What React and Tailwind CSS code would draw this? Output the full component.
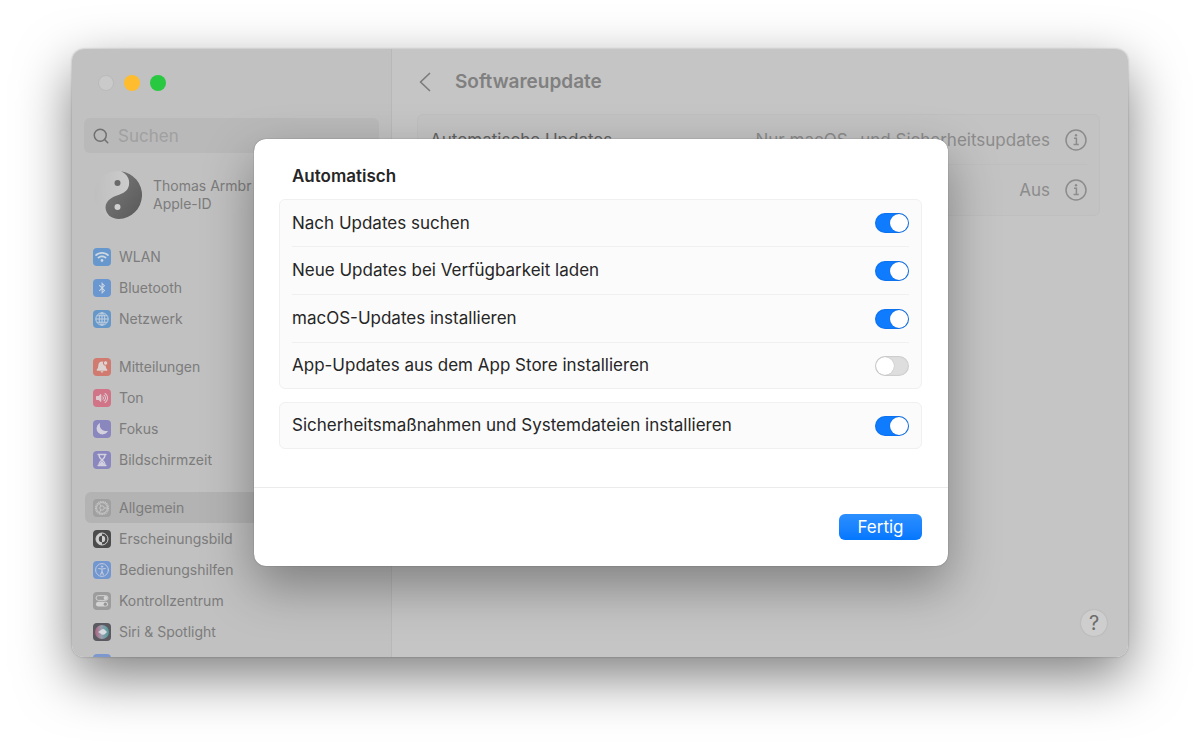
import { useState } from 'react';
import { FaWifi, FaBluetoothB, FaVolumeUp } from 'react-icons/fa';
import { LuSearch } from 'react-icons/lu';
import clsx from 'clsx';

function GlobeIcon() {
  return (
    <svg viewBox="0 0 18 18" className="size-full" fill="none" stroke="#c3d0df" strokeWidth="1">
      <circle cx="9" cy="9" r="6.2" />
      <ellipse cx="9" cy="9" rx="2.8" ry="6.2" />
      <path d="M2.8 9h12.4M9 2.8v12.4M3.8 5.8h10.4M3.8 12.2h10.4" />
    </svg>
  );
}

function BellIcon() {
  return (
    <svg viewBox="0 0 18 18" className="size-full" fill="#dcd2d0">
      <path d="M9 3.6c-2.4 0-3.7 1.8-3.7 4 0 2.5-.9 3.2-1.6 4.2-.3.5 0 .9.5.9h9.600c.5 0 .8-.4.5-.9-.7-1-1.600-1.700-1.600-4.200 0-2.200-1.300-4-3.700-4z" />
      <path d="M7.500 13.300h3c-.2.900-.8 1.300-1.500 1.300s-1.300-.4-1.500-1.300z" />
      <circle cx="12.600" cy="5" r="2.300" stroke="#d07a70" strokeWidth="1" />
    </svg>
  );
}

function MoonIcon() {
  return (
    <svg viewBox="0 0 18 18" className="size-full" fill="#d3d1dd">
      <path d="M7 3.600a.4.4 0 0 0-.6-.3 6 6 0 1 0 8.300 8.200.4.4 0 0 0-.5-.6A6 6 0 0 1 7 3.600z" />
    </svg>
  );
}

function HourglassIcon() {
  return (
    <svg viewBox="0 0 18 18" className="size-full" fill="none" stroke="#d3d1dd" strokeWidth="1.300" strokeLinecap="round">
      <path d="M5 3.500h8M5 14.500h8M6 3.800c0 3 1.200 4 3 5.200 1.800-1.200 3-2.200 3-5.200M6 14.200c0-3 1.200-4 3-5.200 1.800 1.200 3 2.200 3 5.200" />
      <path d="M7 13.500 9 11l2 2.500z" fill="#d3d1dd" />
    </svg>
  );
}

function GearIcon() {
  return (
    <svg viewBox="0 0 18 18" className="size-full" fill="none" stroke="#c6c6c6">
      <circle cx="9" cy="9" r="6.400" strokeWidth="1.400" strokeDasharray="1.100 .6" />
      <circle cx="9" cy="9" r="5.400" strokeWidth="1" />
      <circle cx="9" cy="9" r="2.200" strokeWidth="1" />
      <path d="M11.200 9h3.200M7.900 7.100 6.300 4.300M7.900 10.900l-1.600 2.800" strokeWidth="1" />
    </svg>
  );
}

function AppearanceIcon() {
  return (
    <svg viewBox="0 0 18 18" className="size-full">
      <circle cx="9" cy="9" r="6" fill="#4b4b4b" stroke="#cfcfcf" strokeWidth="1" />
      <path d="M9 3a6 6 0 0 0 0 12v-2.800a3.200 3.200 0 0 1 0-6.400z" fill="#cfcfcf" />
      <path d="M9 5.800a3.200 3.200 0 0 1 0 6.400z" fill="#cfcfcf" />
    </svg>
  );
}

function AccessibilityIcon() {
  return (
    <svg viewBox="0 0 18 18" className="size-full" fill="none" stroke="#c3cbdc" strokeLinecap="round">
      <circle cx="9" cy="9" r="6.400" strokeWidth="1" />
      <circle cx="9" cy="5.600" r=".7" fill="#c3cbdc" />
      <path d="M5.700 7.500 9 8l3.300-.5M9 8v2.300M9 10.300l-1.300 3.200M9 10.300l1.300 3.200" strokeWidth="1.100" />
    </svg>
  );
}

function ControlCenterIcon() {
  return (
    <svg viewBox="0 0 18 18" className="size-full">
      <rect x="3" y="3.600" width="12" height="4.800" rx="2.400" fill="none" stroke="#cfcfcf" />
      <circle cx="12.500" cy="6" r="1.900" fill="#d4d4d4" />
      <rect x="3" y="9.800" width="12" height="4.800" rx="2.400" fill="#d4d4d4" />
      <circle cx="12.300" cy="12.200" r="1.600" fill="#949494" />
    </svg>
  );
}

function SiriIcon() {
  return (
    <svg viewBox="0 0 18 18" className="size-full">
      <defs>
        <linearGradient id="siri" x1="0" y1="0" x2="1" y2="0">
          <stop offset="0" stopColor="#b0607c" />
          <stop offset="0.450" stopColor="#9aa0b0" />
          <stop offset="1" stopColor="#4f9a98" />
        </linearGradient>
      </defs>
      <circle cx="9" cy="9" r="7" fill="url(#siri)" />
      <path d="M5 9c2-.5 3-3 5-3 1.500 0 2.500 1.500 4 3-1.500 1.600-2.500 2.800-4 2.800C8 11.800 7 9.500 5 9z" fill="#d6dce0" />
    </svg>
  );
}

const groups = [
  [
    { label: 'WLAN', color: 'bg-[#6697cd]', icon: <FaWifi className="size-3.5 text-[#ced8e2]" /> },
    { label: 'Bluetooth', color: 'bg-[#6a97d0]', icon: <FaBluetoothB className="size-3 text-[#ced8e2]" /> },
    { label: 'Netzwerk', color: 'bg-[#6697c9]', icon: <GlobeIcon /> },
  ],
  [
    { label: 'Mitteilungen', color: 'bg-[#d07a70]', icon: <BellIcon /> },
    { label: 'Ton', color: 'bg-[#d17488]', icon: <FaVolumeUp className="size-3 text-[#ddc9ce]" /> },
    { label: 'Fokus', color: 'bg-[#8a86be]', icon: <MoonIcon /> },
    { label: 'Bildschirmzeit', color: 'bg-[#8a86be]', icon: <HourglassIcon /> },
  ],
  [
    { label: 'Allgemein', color: 'bg-[#a0a0a0]', icon: <GearIcon />, active: true },
    { label: 'Erscheinungsbild', color: 'bg-[#4b4b4b]', icon: <AppearanceIcon /> },
    { label: 'Bedienungshilfen', color: 'bg-[#7297d0]', icon: <AccessibilityIcon /> },
    { label: 'Kontrollzentrum', color: 'bg-[#9c9c9c]', icon: <ControlCenterIcon /> },
    { label: 'Siri & Spotlight', color: 'bg-[#5b5a60]', icon: <SiriIcon /> },
    { color: 'bg-[#7c98cf]' },
  ],
];

const settings = [
  [
    { id: 'check', label: 'Nach Updates suchen', on: true },
    { id: 'download', label: 'Neue Updates bei Verfügbarkeit laden', on: true },
    { id: 'macos', label: 'macOS-Updates installieren', on: true },
    { id: 'apps', label: 'App-Updates aus dem App Store installieren', on: false },
  ],
  [{ id: 'security', label: 'Sicherheitsmaßnahmen und Systemdateien installieren', on: true }],
];

function Avatar() {
  return (
    <svg viewBox="0 0 50 50" className="size-[50px] shrink-0" aria-hidden="true">
      <defs>
        <linearGradient id="yin" x1="0" y1="0" x2="1" y2="1">
          <stop offset="0" stopColor="#7c7c7c" />
          <stop offset="1" stopColor="#585858" />
        </linearGradient>
        <linearGradient id="yang" x1="0" y1="0" x2="1" y2="0">
          <stop offset="0" stopColor="#bfbfbf" />
          <stop offset="1" stopColor="#d0d0d0" />
        </linearGradient>
      </defs>
      <circle cx="25" cy="25" r="24" fill="url(#yang)" />
      <path
        d="M28 1.200C34 4 37 9 36 15c-1 6-6 8.500-12 10.500-6 2-11 5.500-11.500 11.500C12.500 44 18 49 26 49a24 24 0 0 0 2-47.800z"
        fill="url(#yin)"
      />
      <circle cx="24.500" cy="13" r="3" fill="#6a6a6a" />
      <circle cx="24.500" cy="37" r="3" fill="#cfcfcf" />
    </svg>
  );
}

function SidebarItem({ label, color, icon, active }) {
  return (
    <a
      href="#"
      className={clsx(
        'flex h-[31px] shrink-0 items-center gap-2 rounded-md px-2 text-sm text-[#7c7c7c]',
        active && 'bg-[#b3b3b3]'
      )}
    >
      <span className={clsx('flex size-[18px] shrink-0 items-center justify-center overflow-hidden rounded', color)}>
        {icon}
      </span>
      {label}
    </a>
  );
}

function Sidebar() {
  return (
    <aside className="flex w-[320px] shrink-0 flex-col overflow-hidden border-r border-[#b8b8b8] bg-[#c1c1c1] px-3 pt-[26px]">
      <div className="flex shrink-0 gap-2.5 pl-3.5">
        <button aria-label="Schließen" className="size-4 rounded-full border border-[#bababa] bg-[#cacaca]" />
        <button aria-label="Minimieren" className="size-4 rounded-full bg-[#febc2e]" />
        <button aria-label="Maximieren" className="size-4 rounded-full bg-[#28c840]" />
      </div>

      <label className="mt-[27px] flex h-[35px] shrink-0 items-center gap-2 rounded-md bg-[#b9b9b9] px-2 text-[#707070]">
        <LuSearch className="size-[18px] shrink-0" />
        <input
          type="text"
          aria-label="Suchen"
          placeholder="Suchen"
          className="h-[26px] w-full bg-transparent text-[17px] leading-[26px] outline-none placeholder:text-[#a0a0a0]"
        />
      </label>

      <a href="#" className="mt-[17px] flex shrink-0 items-center gap-2.5 pl-[9px] text-sm leading-[18px] text-[#7c7c7c]">
        <Avatar />
        <span>
          <span className="block">Thomas Armbr</span>
          <span className="block">Apple-ID</span>
        </span>
      </a>

      <nav className="mt-[21px] flex flex-col gap-[17px] pl-px">
        {groups.map((group, i) => (
          <div key={i} className="flex flex-col">
            {group.map((item, j) => (
              <SidebarItem key={j} {...item} />
            ))}
          </div>
        ))}
      </nav>
    </aside>
  );
}

function InfoButton({ label }) {
  return (
    <button aria-label={label} className="text-[#8c8c8c]">
      <svg viewBox="0 0 22 22" className="size-[22px]" fill="none" stroke="currentColor" strokeWidth="1.500">
        <circle cx="11" cy="11" r="10" />
        <path d="M9 9.300h2.400v6M8.600 15.500h5.200" />
        <circle cx="11" cy="6.300" r="1.200" fill="currentColor" stroke="none" />
      </svg>
    </button>
  );
}

function Content() {
  return (
    <main className="flex min-w-0 flex-1 flex-col bg-[#c5c5c5] pt-[19px] pr-[28px] pb-[21px] pl-[25px]">
      <header className="flex h-7 items-center gap-6 pl-0.5">
        <button aria-label="Zurück" className="text-[#7c7c7c]">
          <svg
            viewBox="0 0 12 20"
            className="h-5 w-3"
            fill="none"
            stroke="currentColor"
            strokeWidth="1.700"
            strokeLinecap="round"
            strokeLinejoin="round"
          >
            <path d="M10.500 1.500 1.500 10l9 8.500" />
          </svg>
        </button>
        <h1 className="text-[19px] leading-7 font-semibold text-[#808080]">Softwareupdate</h1>
      </header>

      <div className="mt-[18px] divide-y divide-[#bfbfbf] rounded-md border border-[#bfbfbf] bg-[#c3c3c3] px-3 text-[17px] leading-[26px] text-[#8c8c8c]">
        <div className="flex h-[50px] items-center gap-[15px]">
          <span className="flex-1 text-[#626262]">Automatische Updates</span>
          <span>Nur macOS- und Sicherheitsupdates</span>
          <InfoButton label="Info zu automatischen Updates" />
        </div>
        <div className="flex h-[50px] items-center justify-end gap-[15px]">
          <span>Aus</span>
          <InfoButton label="Info zu Beta-Updates" />
        </div>
      </div>

      <button
        aria-label="Hilfe"
        className="mt-auto -mr-[7px] size-[26px] self-end rounded-full bg-[#cecece] text-xl leading-none text-[#6c6c6c] shadow-[0_0_2px_rgba(0,0,0,0.15)]"
      >
        ?
      </button>
    </main>
  );
}

function SettingRow({ id, label, checked, onChange }) {
  return (
    <div className="flex h-12 items-center justify-between border-b border-[#f0f0f0] first:h-[47px] last:h-[45px] last:border-b-0">
      <label htmlFor={id} className="flex-1 leading-[27px]">
        {label}
      </label>
      <input
        id={id}
        type="checkbox"
        role="switch"
        checked={checked}
        onChange={onChange}
        className="flex h-5 w-[34px] appearance-none items-center rounded-full bg-[#dedede] p-px shadow-[inset_0_0_1px_1px_rgba(0,0,0,0.08)] before:size-[18px] before:rounded-full before:bg-white before:shadow-[0_0_1px_rgba(0,0,0,0.3)] checked:justify-end checked:bg-[#0f7bff]"
      />
    </div>
  );
}

function UpdateDialog() {
  const [values, setValues] = useState(() =>
    Object.fromEntries(settings.flat().map((item) => [item.id, item.on]))
  );

  const toggle = (id) => setValues((prev) => ({ ...prev, [id]: !prev[id] }));

  return (
    <section
      role="dialog"
      aria-labelledby="dialog-title"
      className="w-full max-w-[694px] rounded-xl bg-white text-[17px] text-[#262626] shadow-[0_0_1px_rgba(0,0,0,0.6),0_20px_50px_rgba(0,0,0,0.35)]"
    >
      <div className="pt-[26px] pr-[26px] pb-[38px] pl-[25px]">
        <h2 id="dialog-title" className="px-[13px] leading-[22px] font-semibold">
          Automatisch
        </h2>
        <div className="mt-3 flex flex-col gap-[13px]">
          {settings.map((group, i) => (
            <div key={i} className="rounded-md border border-[#f0f0f0] bg-[#fbfbfb] px-3">
              {group.map((item) => (
                <SettingRow
                  key={item.id}
                  id={item.id}
                  label={item.label}
                  checked={values[item.id]}
                  onChange={() => toggle(item.id)}
                />
              ))}
            </div>
          ))}
        </div>
      </div>

      <footer className="flex justify-end border-t border-[#ebebeb] p-[26px]">
        <button className="h-[26px] w-[83px] rounded-md bg-linear-to-b from-[#2b8fff] to-[#0377ff] leading-none text-white">
          Fertig
        </button>
      </footer>
    </section>
  );
}

export default function App() {
  return (
    <div className="flex h-screen min-h-[600px] flex-col bg-white px-[72px] pt-[49px] pb-[95px] font-[Inter,'Liberation_Sans',sans-serif]">
      <div className="relative flex flex-1 overflow-hidden rounded-xl shadow-[0_0_2px_rgba(0,0,0,0.3),0_20px_54px_rgba(0,0,0,0.5)]">
        <Sidebar />
        <Content />
        <div className="absolute inset-0 flex items-start justify-center pt-[90px] pl-0.5">
          <UpdateDialog />
        </div>
      </div>
    </div>
  );
}
